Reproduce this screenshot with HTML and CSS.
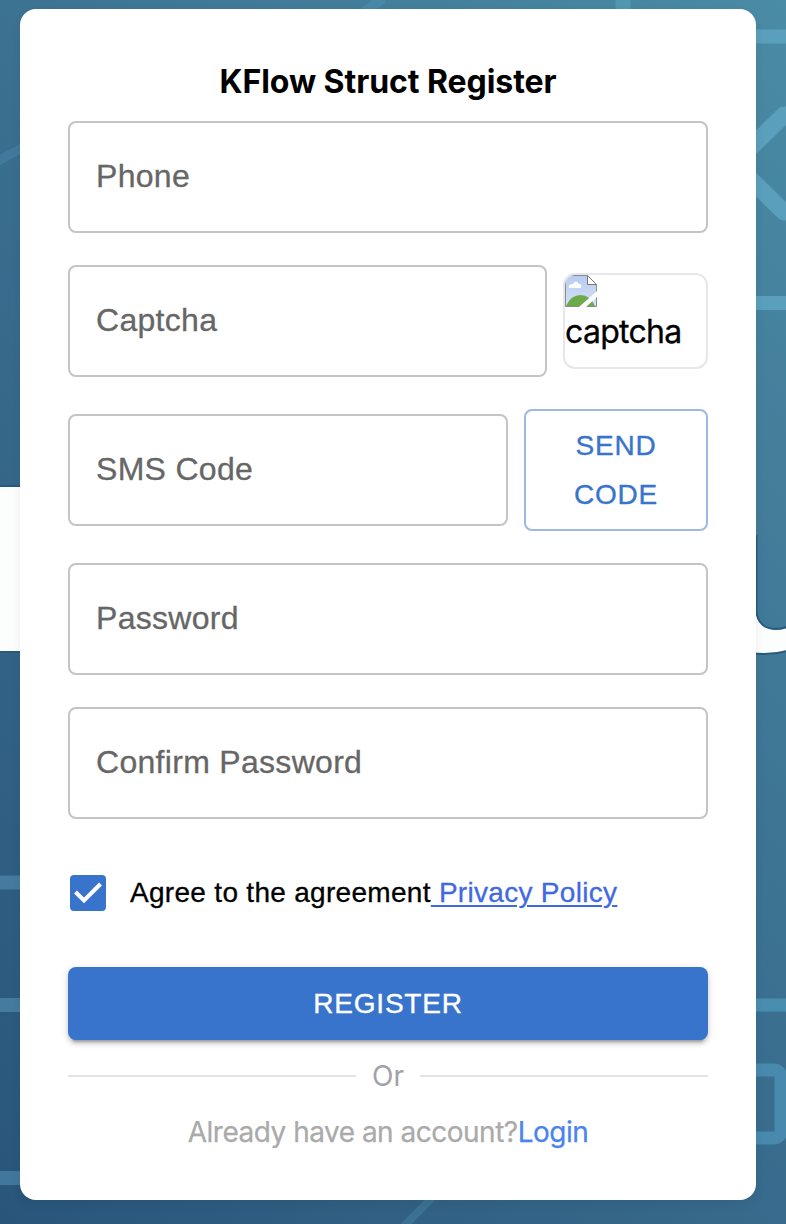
FILE: index.html
```html
<!DOCTYPE html>
<html lang="en">
<head>
<meta charset="utf-8">
<title>KFlow Struct Register</title>
<link rel="stylesheet" href="styles.css">
</head>
<body>
<svg class="backdrop" viewBox="0 0 786 1224" aria-hidden="true">
  <g fill="none" stroke="#5a9fbc" stroke-width="14">
    <path d="M750 36.500H786M750 303H786"/>
    <path d="M623 0V12" stroke="#5097b2" stroke-width="15"/>
    <path d="M740 158L784 115H800M740 169L784 212H800" stroke-width="17" stroke-linejoin="round"/>
    <path d="M-4 162L24 147" stroke="#417a9c" stroke-width="9"/>
    <path d="M364 12L384 -2" stroke="#4688a5" stroke-width="10"/>
    <path d="M0 882.500H22M0 1005H22" stroke="#447b9e"/>
    <path d="M0 1178H22" stroke="#41779c"/>
    <path d="M750 1005H786" stroke="#498eae" stroke-width="13"/>
    <path d="M750 1070H773Q781 1070 781 1078V1130Q781 1138 773 1138H750" stroke="#478aae" stroke-width="13"/>
    <path d="M404 1226L432 1198" stroke="#3b7192" stroke-width="8"/>
  </g>
  <g fill="#fcfdfd" stroke="#285a80" stroke-width="2">
    <path d="M-3 486H24V652H-3Z"/>
    <path d="M750 536H756.500V611C757 622 764 629 776 629Q782 629 790 626V650Q772 656 750 653Z"/>
  </g>
</svg>
<main class="card">
  <h1 class="title">KFlow Struct Register</h1>
  <form class="form">
    <div class="field"><span class="label">Phone</span></div>
    <div class="row">
      <div class="field"><span class="label">Captcha</span></div>
      <div class="captcha">
        <svg class="broken" viewBox="0 0 32 32" aria-hidden="true">
          <defs><linearGradient id="sky" x1="0" y1="0" x2="0" y2="1"><stop offset="0" stop-color="#b8ccef"/><stop offset="1" stop-color="#d5e0f6"/></linearGradient></defs>
          <path d="M.500 .500H22.500L31.500 9.500V31.500H.500Z" fill="url(#sky)" stroke="#8b8b8b"/>
          <path d="M1 31Q6 20 15.500 20Q25 20 30 31Z" fill="#6caa4a"/>
          <path d="M4 13Q3 9 8 9Q11 4 14 9Q17 9 16 13Z" fill="#fff"/>
          <path d="M14 32L32 16V22L21 32Z" fill="#fff"/>
          <path d="M22.500 .500V9.500H31.500Z" fill="#fff" stroke="#777"/>
        </svg>
        <span class="alt">captcha</span>
      </div>
    </div>
    <div class="row">
      <div class="field"><span class="label">SMS Code</span></div>
      <button class="send" type="button">SEND<br>CODE</button>
    </div>
    <div class="field"><span class="label">Password</span></div>
    <div class="field"><span class="label">Confirm Password</span></div>
    <div class="agree">
      <svg class="check" viewBox="0 0 36 36" aria-hidden="true"><rect width="36" height="36" rx="4" fill="#3874cb"/><path d="M5.500 17L14 25.500L30.500 9" fill="none" stroke="#fff" stroke-width="4"/></svg>
      <span class="agree-text">Agree to the agreement<a class="policy" href="#">&nbsp;Privacy Policy</a></span>
    </div>
    <button class="register" type="button">REGISTER</button>
  </form>
  <div class="divider"><span class="or">Or</span></div>
  <p class="signin">Already have an account?<a class="login" href="#">Login</a></p>
</main>
</body>
</html>
```
FILE: styles.css
```css
* { box-sizing: border-box; }
body {
  margin: 0;
  height: 1224px;
  padding: 9px 30px 24px 20px;
  overflow: hidden;
  font-family: "Liberation Sans", Arial, sans-serif;
  background: linear-gradient(230deg, #4a8ba5 0%, #3a6e8f 50%, #29557a 100%);
}
.backdrop { position: absolute; left: 0; top: 0; width: 786px; height: 1224px; }
.card {
  position: relative;
  width: 736px;
  height: 1191px;
  padding: 48px;
  border-radius: 16px;
  background: #fff;
  box-shadow: 0 4px 12px rgba(0, 0, 0, .06);
}
.title {
  margin: 0 0 16px;
  height: 48px;
  font: 700 32px/50px Inter, sans-serif;
  letter-spacing: -.06px;
  text-align: center;
}
.form { display: flex; flex-direction: column; gap: 32px; }
.row { display: flex; align-items: center; gap: 16px; }
.field {
  flex: 1 0 auto;
  height: 112px;
  padding: 0 26px;
  border: 2px solid #c4c4c4;
  border-radius: 8px;
  display: flex;
  align-items: center;
}
.label {
  padding-bottom: 2px;
  font-size: 32px;
  line-height: 46px;
  letter-spacing: .3px;
  color: #666;
  -webkit-text-stroke: .3px currentColor;
}
.captcha {
  width: 145px;
  height: 96px;
  border: 2px solid #e5e7eb;
  border-radius: 12px;
  overflow: hidden;
}
.broken { display: block; width: 32px; height: 32px; }
.alt {
  display: block;
  font: 32px/50px Inter, sans-serif;
  letter-spacing: -.7px;
  -webkit-text-stroke: .3px currentColor;
}
.send {
  width: 184px;
  height: 122px;
  padding: 0;
  border: 2px solid #9bb9e5;
  border-radius: 8px;
  background: none;
  color: #3874cb;
  font: 28px/49px "Liberation Sans", Arial, sans-serif;
  letter-spacing: .8px;
  -webkit-text-stroke: .35px currentColor;
}
.agree { display: flex; align-items: center; gap: 24px; height: 84px; padding: 0 2px; }
.check { width: 36px; height: 36px; }
.agree-text { font-size: 28px; line-height: 40px; letter-spacing: .3px; -webkit-text-stroke: .3px currentColor; }
.policy { color: #4169e1; text-decoration: underline; text-decoration-thickness: 2px; text-underline-offset: 3px; }
.register {
  height: 73px;
  border: 0;
  border-radius: 8px;
  background: #3874cb;
  color: #fff;
  font: 28px/49px "Liberation Sans", Arial, sans-serif;
  letter-spacing: .8px;
  -webkit-text-stroke: .35px currentColor;
  box-shadow: 0 6px 2px -4px rgba(0, 0, 0, .2), 0 4px 4px rgba(0, 0, 0, .14), 0 2px 10px rgba(0, 0, 0, .12);
}
.divider { display: flex; align-items: center; gap: 16px; height: 40px; margin-top: 16px; }
.divider::before, .divider::after { content: ""; flex: 1; height: 2px; background: #e4e4e7; }
.or { font: 28px/40px Inter, sans-serif; color: #a1a1aa; }
.signin {
  margin: 16px 0 0;
  font: 28px/41px Inter, sans-serif;
  text-align: center;
  letter-spacing: -.5px;
  color: #aaa;
  -webkit-text-stroke: .25px currentColor;
}
.login { color: #4b83f0; text-decoration: none; }
```
